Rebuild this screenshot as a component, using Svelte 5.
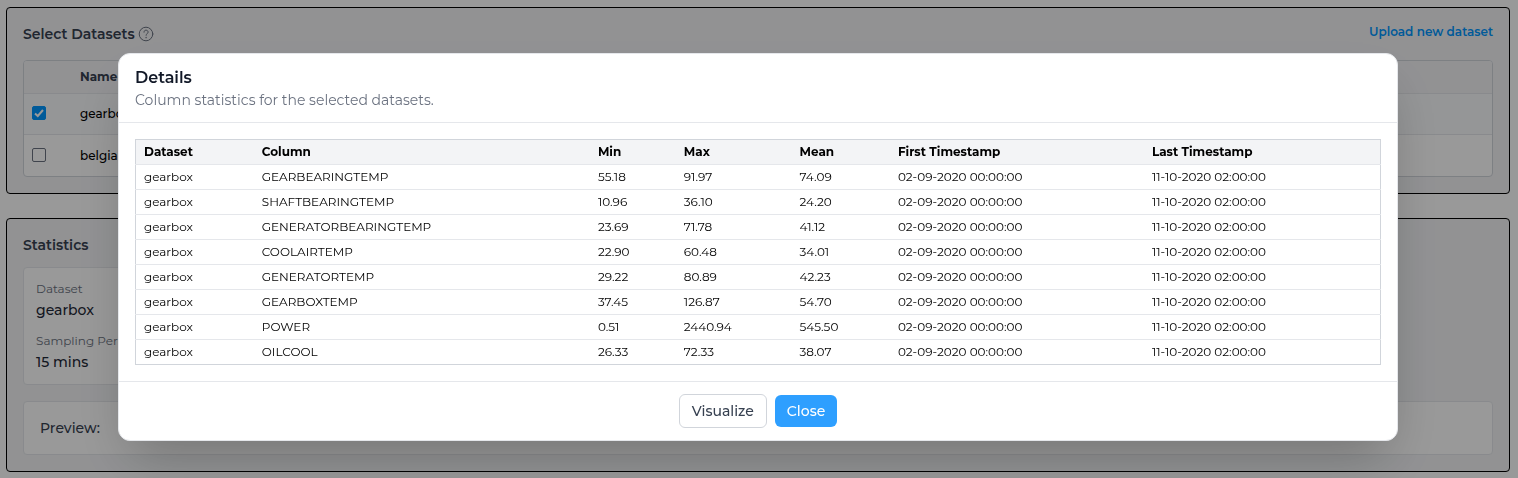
<script>
  let showDetails = true

  let datasets = [
    { name: 'gearbox', selected: true },
    { name: 'belgian', selected: false },
  ]

  const columns = ['Dataset', 'Column', 'Min', 'Max', 'Mean', 'First Timestamp', 'Last Timestamp']
  const first = '02-09-2020 00:00:00'
  const last = '11-10-2020 02:00:00'
  const rows = [
    ['gearbox', 'GEARBEARINGTEMP', '55.18', '91.97', '74.09', first, last],
    ['gearbox', 'SHAFTBEARINGTEMP', '10.96', '36.10', '24.20', first, last],
    ['gearbox', 'GENERATORBEARINGTEMP', '23.69', '71.78', '41.12', first, last],
    ['gearbox', 'COOLAIRTEMP', '22.90', '60.48', '34.01', first, last],
    ['gearbox', 'GENERATORTEMP', '29.22', '80.89', '42.23', first, last],
    ['gearbox', 'GEARBOXTEMP', '37.45', '126.87', '54.70', first, last],
    ['gearbox', 'POWER', '0.51', '2440.94', '545.50', first, last],
    ['gearbox', 'OILCOOL', '26.33', '72.33', '38.07', first, last],
  ]
</script>

<main>
  <section class="panel">
    <header class="panel-head">
      <h2>
        Select Datasets
        <svg width="16" height="16" viewBox="0 0 16 16" fill="none" stroke="currentColor" stroke-linecap="round" stroke-linejoin="round" aria-hidden="true">
          <circle cx="8" cy="8" r="6.8" />
          <path d="M6 6.2c0-1.3.8-2 2-2s2.1.8 2.1 1.9c0 1.5-2 1.6-2 3.2" />
          <path d="M8.1 11.5v.2" stroke-width="1.3" />
        </svg>
      </h2>
      <a href="#upload">Upload new dataset</a>
    </header>
    <div class="list">
      <table>
        <thead>
          <tr><th class="pick"></th><th>Name</th></tr>
        </thead>
        <tbody>
          {#each datasets as dataset}
            <tr class:selected={dataset.selected}>
              <td class="pick">
                <span class="check">
                  <input type="checkbox" id={dataset.name} bind:checked={dataset.selected} />
                  <svg viewBox="0 0 14 14" fill="none" stroke="#fff" stroke-width="2" aria-hidden="true">
                    <path d="M3 7.4l2.8 2.6L11 4" />
                  </svg>
                </span>
              </td>
              <td><label for={dataset.name}>{dataset.name}</label></td>
            </tr>
          {/each}
        </tbody>
      </table>
    </div>
  </section>

  <section class="panel statistics">
    <h2>Statistics</h2>
    <dl class="card">
      <div>
        <dt>Dataset</dt>
        <dd>gearbox</dd>
      </div>
      <div>
        <dt>Sampling Period</dt>
        <dd>15 mins</dd>
      </div>
    </dl>
    <div class="preview">Preview:</div>
  </section>
</main>

{#if showDetails}
  <div class="overlay">
    <dialog open aria-labelledby="details-title">
      <header>
        <h3 id="details-title">Details</h3>
        <p>Column statistics for the selected datasets.</p>
      </header>
      <div class="body">
        <table>
          <colgroup>
            <col class="c-dataset" />
            <col class="c-column" />
            <col class="c-min" />
            <col class="c-max" />
            <col class="c-mean" />
            <col class="c-first" />
            <col />
          </colgroup>
          <thead>
            <tr>
              {#each columns as column}
                <th>{column}</th>
              {/each}
            </tr>
          </thead>
          <tbody>
            {#each rows as row}
              <tr>
                {#each row as cell}
                  <td>{cell}</td>
                {/each}
              </tr>
            {/each}
          </tbody>
        </table>
      </div>
      <footer>
        <button type="button">Visualize</button>
        <button type="button" class="primary" on:click={() => (showDetails = false)}>Close</button>
      </footer>
    </dialog>
  </div>
{/if}

<style>
  :global(body) {
    margin: 0;
    background: #fff;
    font-family: Montserrat, Inter, sans-serif;
    font-size: 14px;
    line-height: 20px;
    color: #000;
  }
  main {
    display: flex;
    flex-direction: column;
    gap: 24px;
    padding: 7px 8px 6px 6px;
  }
  h2,
  h3,
  p,
  dl,
  dd {
    margin: 0;
  }
  table {
    width: 100%;
    border-collapse: collapse;
  }
  th,
  td {
    text-align: left;
  }
  .panel {
    padding: 16px;
    border: 1px solid #000;
    border-radius: 4px;
    background: #f3f4f6;
  }
  .panel-head {
    display: flex;
    justify-content: space-between;
    margin-bottom: 16px;
  }
  h2 {
    display: flex;
    align-items: center;
    gap: 3px;
    font-size: 14px;
    line-height: 20px;
    font-weight: 600;
    color: #374151;
  }
  h2 svg {
    color: #6b7280;
  }
  a {
    height: 16px;
    font-size: 12px;
    line-height: 16px;
    font-weight: 600;
    color: #0096ff;
    text-decoration: none;
  }
  .list {
    overflow: hidden;
    border: 1px solid #d1d5db;
    border-radius: 4px;
    background: #fff;
  }
  .list th {
    height: 32px;
    padding: 0 8px;
    background: #f3f4f6;
    font-size: 12px;
    font-weight: 700;
    color: #374151;
  }
  .list td {
    height: 40px;
    padding: 0 8px;
    border-top: 1px solid #e5e7eb;
    font-size: 12px;
    font-weight: 500;
  }
  .list tr:last-child td {
    height: 41px;
  }
  .list .pick {
    width: 32px;
  }
  .selected {
    background: #f8fafc;
  }
  .check {
    display: grid;
    width: 14px;
    height: 14px;
    margin-bottom: 2px;
  }
  .check > * {
    grid-area: 1 / 1;
  }
  .check svg {
    display: none;
    pointer-events: none;
  }
  input {
    appearance: none;
    box-sizing: border-box;
    width: 14px;
    height: 14px;
    margin: 0;
    border: 1px solid #6b7280;
    border-radius: 2px;
    background: #fff;
  }
  input:checked {
    border-color: #0096ff;
    background: #0096ff;
  }
  input:checked + svg {
    display: block;
  }
  .statistics {
    display: flex;
    flex-direction: column;
    gap: 16px;
  }
  .statistics h2 {
    margin-bottom: -4px;
  }
  .card {
    display: flex;
    flex-direction: column;
    gap: 10px;
    width: 240px;
    padding: 10px 12px 12px;
    border: 1px solid #e5e7eb;
    border-radius: 4px;
    background: #fff;
  }
  dt {
    font-size: 12px;
    line-height: 22px;
    color: #6b7280;
  }
  dd {
    font-size: 14px;
    line-height: 20px;
    font-weight: 500;
    color: #1f2937;
  }
  .preview {
    padding: 16px;
    border: 1px solid #e5e7eb;
    border-radius: 4px;
    background: #fff;
    font-size: 14px;
    font-weight: 500;
    color: #374151;
  }
  .overlay {
    position: fixed;
    inset: 0;
    display: flex;
    align-items: flex-start;
    justify-content: center;
    padding: 53px 2px 0 0;
    background: rgba(0, 0, 0, 0.4);
  }
  dialog {
    position: static;
    box-sizing: border-box;
    width: 100%;
    max-width: 1280px;
    margin: 0;
    padding: 0;
    border: 1px solid #e5e7eb;
    border-radius: 12px;
    background: #fff;
    color: #000;
    box-shadow: 0 25px 50px -12px rgba(0, 0, 0, 0.25);
  }
  dialog header {
    padding: 12px 16px;
    border-bottom: 1px solid #e5e7eb;
  }
  h3 {
    font-size: 16px;
    line-height: 24px;
    font-weight: 600;
    color: #111827;
  }
  dialog p {
    font-size: 14px;
    line-height: 20px;
    color: #6b7280;
  }
  .body {
    padding: 16px;
  }
  .body table {
    table-layout: fixed;
    border: 1px solid #d1d5db;
    font-size: 12px;
    line-height: 16px;
  }
  .body thead {
    background: #f3f4f6;
  }
  .body th,
  .body td {
    padding: 4px 8px;
  }
  .body tbody tr {
    border-top: 1px solid #e5e7eb;
  }
  .c-dataset {
    width: 9.5%;
  }
  .c-column {
    width: 27%;
  }
  .c-min {
    width: 6.9%;
  }
  .c-max {
    width: 9.3%;
  }
  .c-mean {
    width: 7.9%;
  }
  .c-first {
    width: 20.4%;
  }
  footer {
    display: flex;
    align-items: center;
    justify-content: center;
    gap: 8px;
    padding: 12px 16px;
    border-top: 1px solid #e5e7eb;
  }
  button {
    padding: 6px 12px;
    border: 1px solid #d1d5db;
    border-radius: 6px;
    background: #fff;
    font: 500 14px/20px Montserrat, Inter, sans-serif;
    color: #374151;
    cursor: pointer;
  }
  button.primary {
    border: 0;
    background: #2e9fff;
    color: #fff;
  }
</style>
